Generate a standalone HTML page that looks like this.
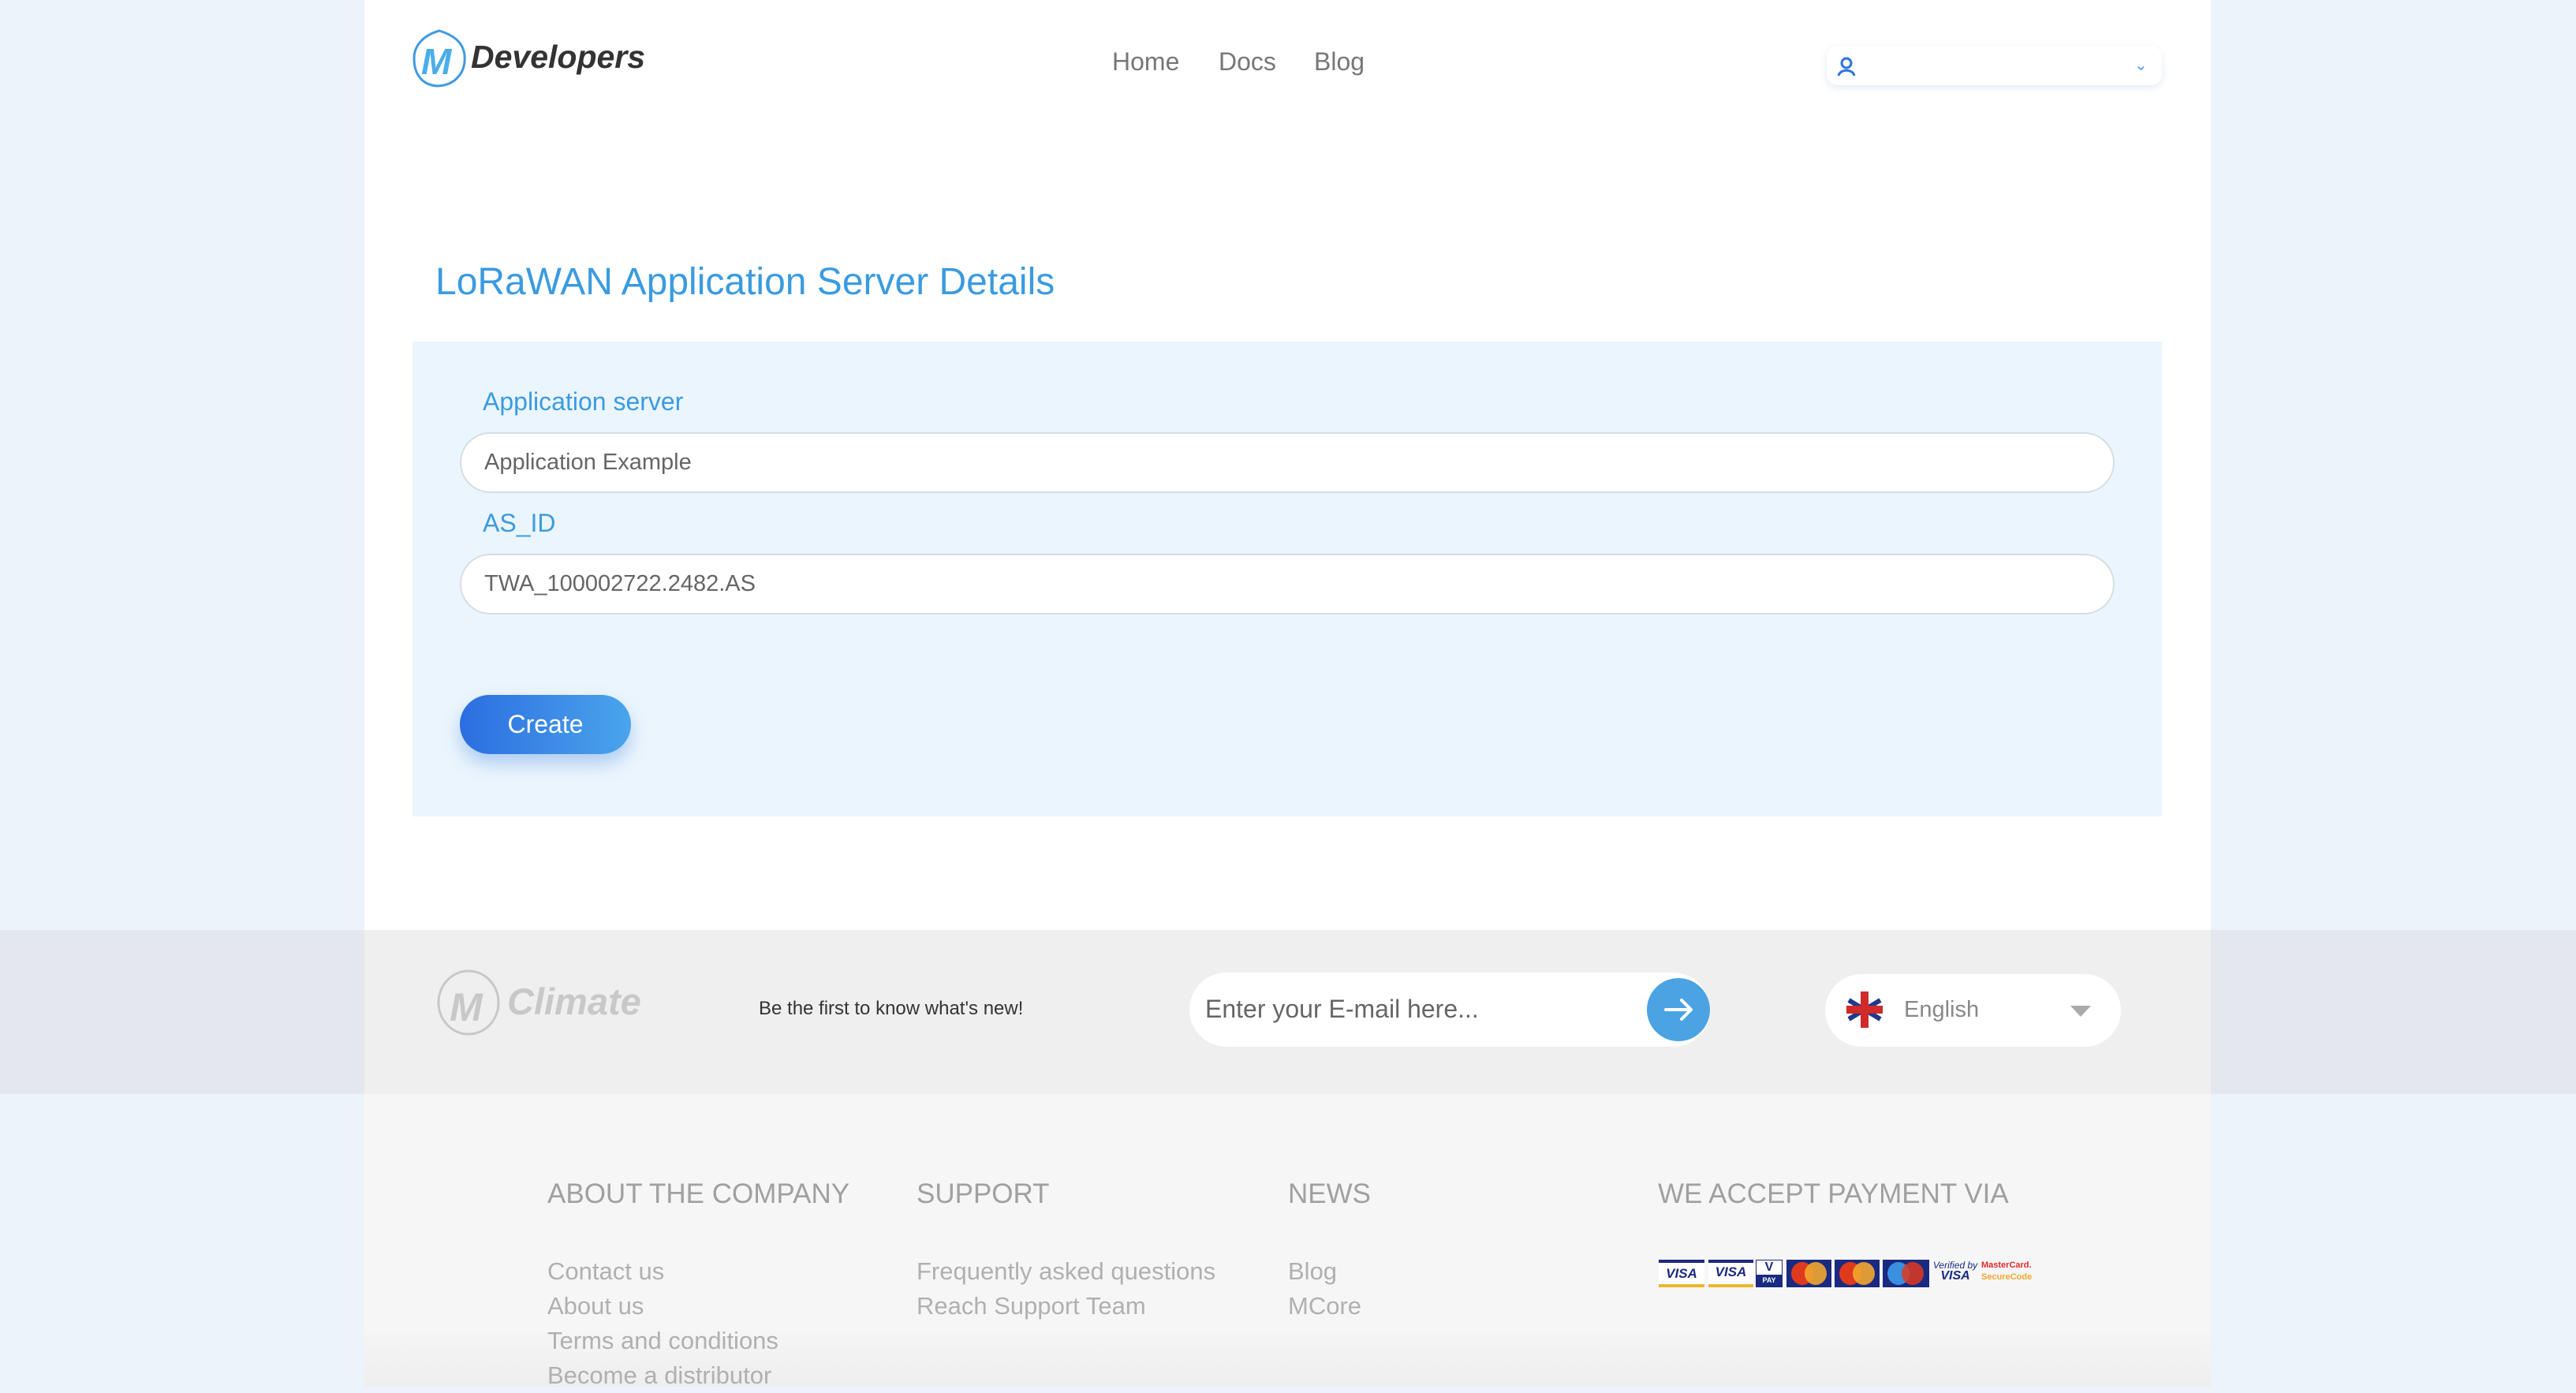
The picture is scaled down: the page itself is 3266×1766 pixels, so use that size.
<!DOCTYPE html>
<html><head><meta charset="utf-8"><style>
*{margin:0;padding:0;box-sizing:border-box}
body{width:3266px;height:1758px;overflow:hidden;background:#edf3fb;font-family:"Liberation Sans",sans-serif;position:relative}
.abs{position:absolute}
.container{left:462px;top:0;width:2341px;height:1179px;background:#fff}
.nav{font-size:32px;color:#777;top:60px}
.lbl{font-size:32px;color:#3a9be0;left:612px}
.inp{left:583px;width:2098px;height:77px;border:2px solid #d6dde3;border-radius:40px;background:#fff;font-size:29px;color:#666;padding-left:29px;line-height:73px}
.h{font-size:35px;color:#a0a0a0;top:1494px}
.lk{font-size:31px;color:#b0b0b0;line-height:44px}
.card{position:absolute;top:1597px;height:35px}
</style></head><body>
<div class="abs container"></div>
<svg class="abs" style="left:521px;top:36px" width="72" height="76" viewBox="0 0 72 76">
<path d="M36 3 C52 8 66 16 68 34 C70 56 56 72 34 73 C14 72 4 58 4 38 C4 20 18 8 36 3Z" fill="none" stroke="#3e9ae2" stroke-width="3"/>
<text x="13" y="58" font-family="Liberation Sans" font-weight="bold" font-style="italic" font-size="46" fill="#4aaeea">M</text>
</svg>
<div class="abs" style="left:597px;top:49px;font-size:41px;font-weight:bold;font-style:italic;color:#333">Developers</div>
<div class="abs nav" style="left:1410px">Home</div>
<div class="abs nav" style="left:1545px">Docs</div>
<div class="abs nav" style="left:1666px">Blog</div>
<div class="abs" style="left:2316px;top:58px;width:425px;height:50px;background:#fff;border-radius:14px;box-shadow:0 3px 10px rgba(120,150,200,.2)"></div>
<svg class="abs" style="left:2327px;top:70px" width="28" height="28" viewBox="0 0 28 28"><circle cx="14" cy="10" r="6" fill="none" stroke="#2f74e0" stroke-width="3"/><path d="M4 26 C6 17 22 17 24 26" fill="none" stroke="#2f74e0" stroke-width="3"/></svg>
<div class="abs" style="left:2706px;top:70px;color:#5a9be6;font-size:20px">&#8964;</div>
<div class="abs" style="left:552px;top:330px;font-size:48px;color:#3a9be0">LoRaWAN Application Server Details</div>
<div class="abs" style="left:523px;top:433px;width:2218px;height:602px;background:#ebf5fd"></div>
<div class="abs lbl" style="top:491px">Application server</div>
<div class="abs inp" style="top:548px">Application Example</div>
<div class="abs lbl" style="top:645px">AS_ID</div>
<div class="abs inp" style="top:702px">TWA_100002722.2482.AS</div>
<div class="abs" style="left:583px;top:881px;width:217px;height:75px;border-radius:38px;background:linear-gradient(90deg,#2c6de0,#4aa5ec);color:#fff;font-size:32px;text-align:center;line-height:75px;box-shadow:0 12px 22px rgba(60,130,220,.35)">Create</div>
<div class="abs" style="left:0;top:1179px;width:3266px;height:208px;background:#e4e8ee"></div>
<div class="abs" style="left:462px;top:1179px;width:2341px;height:208px;background:#efefef"></div>
<svg class="abs" style="left:552px;top:1228px" width="84" height="86" viewBox="0 0 84 86"><ellipse cx="42" cy="43" rx="38" ry="40" fill="none" stroke="#c8c8c8" stroke-width="3"/><text x="18" y="66" font-family="Liberation Sans" font-weight="bold" font-style="italic" font-size="50" fill="#c8c8c8">M</text></svg>
<div class="abs" style="left:643px;top:1242px;font-size:47px;font-weight:bold;font-style:italic;color:#c8c8c8">Climate</div>
<div class="abs" style="left:962px;top:1265px;font-size:24px;color:#333">Be the first to know what's new!</div>
<div class="abs" style="left:1508px;top:1233px;width:660px;height:94px;background:#fff;border-radius:47px"></div>
<div class="abs" style="left:1528px;top:1261px;font-size:32px;color:#666">Enter your E-mail here...</div>
<div class="abs" style="left:2088px;top:1240px;width:80px;height:80px;border-radius:50%;background:#4ba3e3"></div>
<svg class="abs" style="left:2102px;top:1254px" width="52" height="52" viewBox="0 0 52 52"><path d="M10 26H42M30 14L42 26L30 38" fill="none" stroke="#fff" stroke-width="4" stroke-linecap="round" stroke-linejoin="round"/></svg>
<div class="abs" style="left:2314px;top:1235px;width:375px;height:92px;background:#fff;border-radius:46px"></div>
<svg class="abs" style="left:2339px;top:1254px" width="50" height="52" viewBox="0 0 50 52"><circle cx="25" cy="26" r="23" fill="#fff"/><path d="M5 14L45 38M45 14L5 38" stroke="#1f3a8a" stroke-width="6"/><rect x="20" y="3" width="10" height="46" fill="#d02a2a"/><rect x="2" y="21" width="46" height="10" fill="#d02a2a"/></svg>
<div class="abs" style="left:2414px;top:1264px;font-size:29px;color:#888">English</div>
<div class="abs" style="left:2625px;top:1275px;width:0;height:0;border-left:13px solid transparent;border-right:13px solid transparent;border-top:14px solid #aaa"></div>
<div class="abs" style="left:0;top:1387px;width:3266px;height:371px;background:#edf3fb"></div>
<div class="abs" style="left:462px;top:1387px;width:2341px;height:371px;background:linear-gradient(#f6f6f6 80%,#eeeeee)"></div>
<div class="abs h" style="left:694px">ABOUT THE COMPANY</div>
<div class="abs h" style="left:1162px">SUPPORT</div>
<div class="abs h" style="left:1633px">NEWS</div>
<div class="abs h" style="left:2102px">WE ACCEPT PAYMENT VIA</div>
<div class="abs lk" style="left:694px;top:1590px">Contact us<br>About us<br>Terms and conditions<br>Become a distributor</div>
<div class="abs lk" style="left:1162px;top:1590px">Frequently asked questions<br>Reach Support Team</div>
<div class="abs lk" style="left:1633px;top:1590px">Blog<br>MCore</div>
<div class="card" style="left:2103px;width:58px;background:#fff;border-top:4px solid #1a2a80;border-bottom:4px solid #e8b830;font:bold italic 17px 'Liberation Sans';color:#1a2a80;text-align:center;line-height:27px">VISA</div>
<div class="card" style="left:2166px;width:57px;background:#fff;border-top:4px solid #1a2a80;border-bottom:4px solid #e8b830;font:bold italic 17px 'Liberation Sans';color:#1a2a80;text-align:center;line-height:24px">VISA</div>
<div class="card" style="left:2226px;width:34px;background:#fff;border:1px solid #1a2a80;font:bold 16px 'Liberation Sans';color:#1a2a80;text-align:center;line-height:18px">V<div style="background:#1a2a80;color:#fff;font-size:9px;line-height:15px">PAY</div></div>
<div class="card" style="left:2265px;width:57px;background:#1a2a80;overflow:hidden"><div style="position:absolute;left:6px;top:3px;width:28px;height:29px;border-radius:50%;background:#e03a1e"></div><div style="position:absolute;left:23px;top:3px;width:28px;height:29px;border-radius:50%;background:#f2a72e;opacity:.9"></div></div>
<div class="card" style="left:2326px;width:57px;background:#1a2a80;overflow:hidden"><div style="position:absolute;left:6px;top:3px;width:28px;height:29px;border-radius:50%;background:#e03a1e"></div><div style="position:absolute;left:23px;top:3px;width:28px;height:29px;border-radius:50%;background:#f2a72e;opacity:.9"></div></div>
<div class="card" style="left:2387px;width:59px;background:#1a2a80;overflow:hidden"><div style="position:absolute;left:6px;top:3px;width:28px;height:29px;border-radius:50%;background:#3a8fe0"></div><div style="position:absolute;left:24px;top:3px;width:28px;height:29px;border-radius:50%;background:#e03a1e;opacity:.85"></div></div>
<div class="card" style="left:2448px;width:62px;font:italic 12px 'Liberation Sans';color:#1a2a80;text-align:center;line-height:14px">Verified by<br><b style="font-size:16px">VISA</b></div>
<div class="card" style="left:2512px;width:62px;font:bold 11px 'Liberation Sans';text-align:center;line-height:15px;color:#e02a2a">MasterCard.<br><span style="color:#f2a72e">SecureCode</span></div>
</body></html>
